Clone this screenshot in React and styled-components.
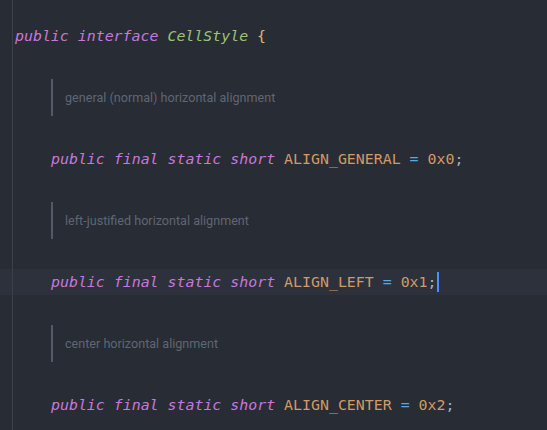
import styled, { createGlobalStyle } from "styled-components";

const Global = createGlobalStyle`
  html, body {
    margin: 0;
    padding: 0;
    background: #282c34;
  }
`;

const guide = "linear-gradient(#3b404a, #3b404a) 12px 0 / 1px 100% no-repeat";

const Editor = styled.div`
  width: 547px;
  height: 430px;
  overflow: hidden;
  padding-top: 22.5px;
  box-sizing: border-box;
  background: ${guide}, #282c34;
  font-family: "DejaVu Sans Mono", "Liberation Mono", monospace;
  font-size: 14.9px;
  color: #abb2bf;
`;

const Line = styled.div`
  height: 26px;
  line-height: 26px;
  padding-left: ${(p) => (p.$indent ? 51 : 15)}px;
  white-space: pre;
  background: ${(p) => (p.$current ? `${guide}, #2c313c` : "transparent")};
`;

const DocBlock = styled.div`
  margin: 30px 0 30px 51px;
  height: 37px;
  display: flex;
  align-items: center;
  border-left: 2px solid #525a6a;
  padding-left: 12px;
  font-family: Roboto, "Noto Sans", sans-serif;
  font-size: 12.6px;
  color: #5f6674;
`;

const Kw = styled.span`
  font-style: italic;
  color: #c678dd;
`;

const Type = styled.span`
  font-style: italic;
  color: #98c379;
`;

const Brace = styled.span`
  color: #e0b566;
`;

const Const = styled.span`
  color: #d19a66;
`;

const Op = styled.span`
  color: #56a8e6;
`;

const Caret = styled.span`
  display: inline-block;
  width: 2px;
  height: 20px;
  vertical-align: middle;
  margin-top: -2px;
  background: #528bff;
`;

const fields = [
  { doc: "general (normal) horizontal alignment", name: "ALIGN_GENERAL", value: "0x0" },
  { doc: "left-justified horizontal alignment", name: "ALIGN_LEFT", value: "0x1", current: true },
  { doc: "center horizontal alignment", name: "ALIGN_CENTER", value: "0x2" },
];

export default function App() {
  return (
    <>
      <Global />
      <Editor>
        <Line>
          <Kw>public interface</Kw> <Type>CellStyle</Type> <Brace>{"{"}</Brace>
        </Line>
        {fields.map((f) => (
          <div key={f.name}>
            <DocBlock>{f.doc}</DocBlock>
            <Line $indent $current={f.current}>
              <Kw>public final static short</Kw> <Const>{f.name}</Const> <Op>=</Op>{" "}
              <Const>{f.value}</Const>;{f.current && <Caret />}
            </Line>
          </div>
        ))}
      </Editor>
    </>
  );
}
